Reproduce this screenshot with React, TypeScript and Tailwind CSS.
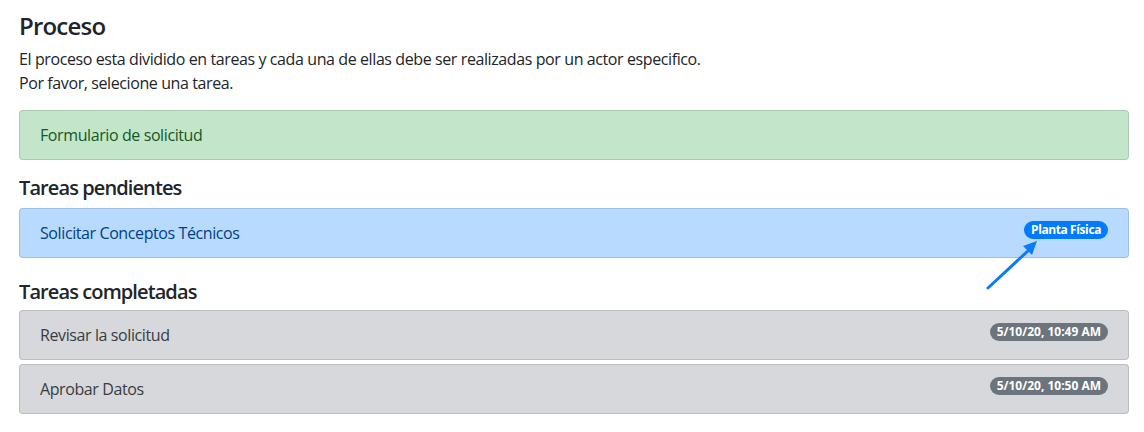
type Task = { name: string; badge: string };

const completed: Task[] = [
  { name: 'Revisar la solicitud', badge: '5/10/20, 10:49 AM' },
  { name: 'Aprobar Datos', badge: '5/10/20, 10:50 AM' },
];

const font = { fontFamily: '"Open Sans", "Noto Sans", sans-serif' };

export default function App() {
  return (
    <main className="relative min-h-[432px] bg-white pl-[19px] pr-[15px] pt-[10px] text-[#212529]" style={font}>
      <h4 className="mt-[2px] mb-[6px] text-[24px] font-semibold leading-[1.2] tracking-[-0.8px]">Proceso</h4>
      <p className="text-[16px] leading-6 tracking-[-0.4px]">
        El proceso esta dividido en tareas y cada una de ellas debe ser realizadas por un actor especifico.
        <br />
        Por favor, selecione una tarea.
      </p>

      <div className="mt-[15px] flex h-[50px] items-center rounded border border-[rgba(0,0,0,0.125)] bg-[#c3e6cb] px-5 text-[16px] tracking-[-0.4px] text-[#155724]">
        Formulario de solicitud
      </div>

      <h5 className="mt-[16px] mb-2 text-[20px] font-semibold leading-6 tracking-[-0.9px]">Tareas pendientes</h5>
      <div className="flex h-[50px] items-start justify-between rounded border border-[rgba(0,0,0,0.125)] bg-[#b8daff] px-5 pt-3 text-[16px] leading-6 text-[#004085]">
        <span className="tracking-[-0.4px]">Solicitar Conceptos Técnicos</span>
        <span className="rounded-full bg-[#007bff] px-[7px] py-[3px] text-[12px] font-bold leading-none tracking-[-0.4px] text-white">
          Planta Física
        </span>
      </div>

      <h5 className="mt-[22px] mb-[6px] text-[20px] font-semibold leading-6 tracking-[-0.9px]">Tareas completadas</h5>
      <div className="flex flex-col gap-1">
        {completed.map((task) => (
          <div
            className="flex h-[50px] items-start justify-between rounded border border-[rgba(0,0,0,0.125)] bg-[#d6d8db] px-5 pt-3 text-[16px] leading-6 text-[#383d41]"
            key={task.name}
          >
            <span className="tracking-[-0.4px]">{task.name}</span>
            <span className="rounded-full bg-[#6c757d] px-[7px] py-[3px] text-[12px] font-bold leading-none text-white">
              {task.badge}
            </span>
          </div>
        ))}
      </div>

      {/* annotation arrow */}
      <svg className="absolute left-[980px] top-[236px]" width="64" height="58" viewBox="0 0 64 58">
        <line x1="8" y1="52" x2="50" y2="13" stroke="#0b7cf2" strokeWidth="3" strokeLinecap="round" />
        <polygon points="57,5 43,10 52,19" fill="#0b7cf2" />
      </svg>
    </main>
  );
}
